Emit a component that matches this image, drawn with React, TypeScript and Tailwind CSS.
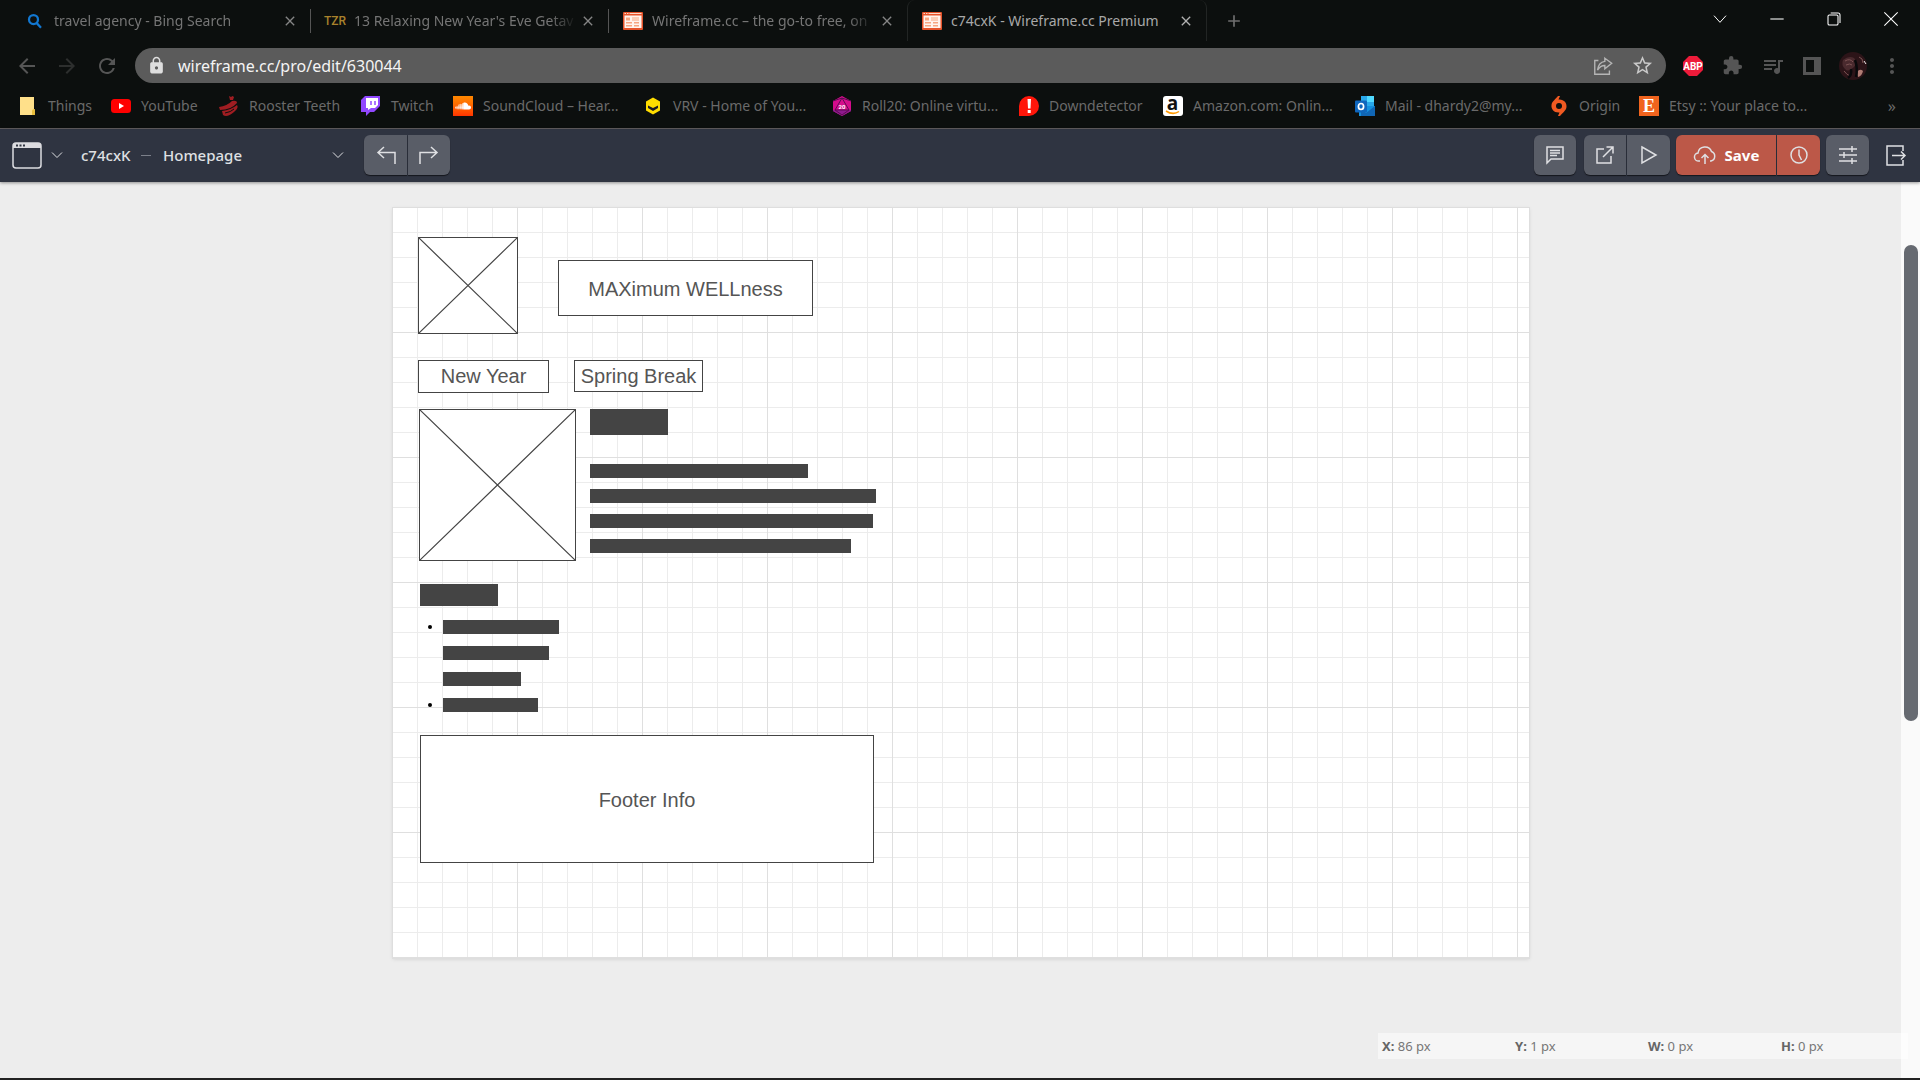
import React from "react";
import { FaSoundcloud } from "react-icons/fa";
import { MdExtension, MdQueueMusic, MdLock, MdStarBorder, MdArrowBack, MdArrowForward, MdRefresh, MdMoreVert, MdClose, MdAdd } from "react-icons/md";

type Children = { children?: React.ReactNode };

function Stroke({ children, className = "size-6", width = 1.5 }: Children & { className?: string; width?: number }) {
  return (
    <svg viewBox="0 0 24 24" className={className} fill="none" stroke="currentColor" strokeWidth={width} aria-hidden="true">
      {children}
    </svg>
  );
}

function BingIcon() {
  return (
    <Stroke className="size-[18px] text-[#1277d0]" width={3}>
      <circle cx="10" cy="10" r="6" />
      <path d="M14 14.500 20 21" />
    </Stroke>
  );
}

function WireframeIcon() {
  return (
    <svg viewBox="0 0 20 18" className="h-[18px] w-5" aria-hidden="true">
      <rect width="20" height="18" rx="1" fill="#e5532a" />
      <path d="M1.500 1.500h1.500M4 1.500h1.500M6.500 1.500h12" stroke="#fbd9c9" strokeWidth="1" />
      <rect x="1.500" y="3.500" width="17" height="12.500" fill="#fff4ee" />
      <path d="M3 5.500h4v3H3zM3 10h6v1.500H3zM3 13h6v1.500H3zM11 10h5v1.500h-5zM11 13h5v1.500h-5zM9 5.500h7v1H9zM9 7.500h7v1H9z" fill="#f7a580" />
    </svg>
  );
}

function TzrIcon() {
  return <span className="font-['Roboto',sans-serif] text-xs font-medium text-[#a9822c]">TZR</span>;
}

const tabs = [
  { title: "travel agency - Bing Search", icon: <BingIcon />, cls: "w-[311px] pl-6 border-r border-[#555]" },
  { title: "13 Relaxing New Year's Eve Getav", icon: <TzrIcon />, cls: "w-[298px] pl-[13px] border-r border-[#555]" },
  { title: "Wireframe.cc – the go-to free, on", icon: <WireframeIcon />, cls: "w-[298px] pl-[13px]" },
];

function Tab({ title, icon, cls }: { title: string; icon: React.ReactNode; cls: string }) {
  return (
    <div className={"flex h-6 shrink-0 items-center pr-3 text-[#757575] " + cls}>
      <span className="flex w-[22px] shrink-0 justify-center">{icon}</span>
      <span className="ml-2 w-[223px] whitespace-nowrap [mask-image:linear-gradient(to_right,#000_88%,transparent)]">{title}</span>
      <button aria-label={"Close " + title} className="ml-auto text-[#858585]"><MdClose className="size-4" /></button>
    </div>
  );
}

const bookmarks = [
  { label: "Things", w: "w-[93px]", icon: <svg viewBox="0 0 20 20" className="size-5"><path d="M2 1h14v13h1v5H2z" fill="#ffe08a" /><path d="M14 19v-4q0-2 3-2v6z" fill="#e8bd3d" /></svg> },
  { label: "YouTube", w: "w-[108px]", icon: <svg viewBox="0 0 20 20" className="size-5"><rect y="3" width="20" height="14" rx="3.500" fill="#f00" /><path d="m8 7 5 3-5 3z" fill="#fff" /></svg> },
  { label: "Rooster Teeth", w: "w-[142px]", icon: <svg viewBox="0 0 20 20" className="size-5"><g fill="#a01d22"><path d="M0 11Q8 10 13 5q5-1 5 2Q12 14 1 14z" /><path d="m10 0 2 1 1.500-1L15 1l-1 3h-3z" /><path d="M3 15q9-1 15-6 2 3-3 7-7 6-11 3z" /></g><path d="M6 17q6-1 9-4" stroke="#0c0f0e" fill="none" /></svg> },
  { label: "Twitch", w: "w-[92px]", icon: <svg viewBox="0 0 20 20" className="size-5"><path d="M4 0 0 4v12h5v4l4-4h4l6-6V0z" fill="#9147ff" /><path d="M5 2h12v7l-3 3h-4l-3 2v-2H5z" fill="#fff" /><path d="M10 5v4M14 5v4" stroke="#9147ff" strokeWidth="1.500" /></svg> },
  { label: "SoundCloud – Hear...", w: "w-[190px]", icon: <span className="flex size-5 items-center justify-center bg-linear-to-b from-[#ff8800] to-[#ff3300] text-white"><FaSoundcloud className="size-4" /></span> },
  { label: "VRV - Home of You...", w: "w-[189px]", icon: <svg viewBox="0 0 20 20" className="size-5"><path d="m10 1.500 7 4v9l-7 4-7-4v-9z" fill="#fd0" /><path d="M5 9.500 10 12l5-2.500V12l-5 3-5-3z" fill="#1b1a26" /></svg> },
  { label: "Roll20: Online virtu...", w: "w-[187px]", icon: <svg viewBox="0 0 20 20" className="size-5"><path d="m10 0 9 5v10l-9 5-9-5V5z" fill="#d60c8c" /><path d="M1 14h18v1l-9 5-9-5z" fill="#8e1a8e" /><path d="m10 2-7 12h14zM3 14l7 5 7-5M1 5l9-3 9 3" stroke="#5d0b52" fill="none" /><text x="10" y="12.500" fontSize="6" fontWeight="700" textAnchor="middle" fill="#fff" fontFamily="Roboto">20</text></svg> },
  { label: "Downdetector", w: "w-[144px]", icon: <svg viewBox="0 0 20 20" className="size-5"><path d="M0 20V10A10 10 0 1 1 10 20z" fill="#ff160a" /><path d="M8.500 3h3.500L11.500 12.500H9zM8.700 14h3v3h-3z" fill="#fff" /></svg> },
  { label: "Amazon.com: Onlin...", w: "w-[192px]", icon: <svg viewBox="0 0 20 20" className="size-5"><rect width="20" height="20" rx="3" fill="#fff" /><text x="9.500" y="13.500" fontSize="19" fontWeight="700" textAnchor="middle" fill="#111" fontFamily="Open Sans">a</text><path d="M3 15q7 4.500 13 .5" stroke="#f90" strokeWidth="1.500" fill="none" /></svg> },
  { label: "Mail - dhardy2@my...", w: "w-[194px]", icon: <svg viewBox="0 0 20 20" className="size-5"><path d="M6 0h13v12H6z" fill="#28a8ea" /><path d="M12 0h7v6h-7z" fill="#50d9ff" /><path d="M4 10h16v10H4z" fill="#1490df" /><path d="m20 10-9 7-5-4v7h14z" fill="#1066b5" /><rect y="4.500" width="12" height="12" rx="1" fill="#0f66bd" /><ellipse cx="6" cy="10.500" rx="2.600" ry="3" fill="none" stroke="#fff" strokeWidth="1.700" /></svg> },
  { label: "Origin", w: "w-[90px]", icon: <svg viewBox="0 0 20 20" className="size-5"><path d="M11 0 9.500 3.500C15 3 18 7 17.500 11 17 15 13 17 11 20H9l1.500-3.500C5 17 2 13 2.500 9 3 5 7 3 9 0z" fill="#f05a22" /><circle cx="10" cy="10" r="3" fill="#0c0f0e" /></svg> },
  { label: "Etsy :: Your place to...", w: "w-[200px]", icon: <span className="flex size-5 items-center justify-center bg-[#f1641e] font-['Liberation_Serif',serif] text-lg font-bold text-white">E</span> },
];

function ToolButton({ label, className, children }: Children & { label: string; className: string }) {
  return (
    <button aria-label={label} className={"flex h-10 items-center justify-center text-[#dfe0e3] shadow-[0_1px_1px_#15171d] " + className}>
      {children}
    </button>
  );
}

function BrowserChrome() {
  return (
    <header className="border-b border-[#625e60] bg-[#0c0f0e] text-sm text-[#6a6a6a]">
      <div className="flex h-[41px] items-center">
        {tabs.map((t) => <Tab key={t.title} {...t} />)}
        <div className="flex h-full w-[300px] shrink-0 items-center rounded-t-lg border-r border-l border-[#222524] pr-3 pl-[13px] text-[#a8a8a8]">
          <span className="flex w-[22px] justify-center"><WireframeIcon /></span>
          <span className="ml-2 whitespace-nowrap">c74cxK - Wireframe.cc Premium</span>
          <button aria-label="Close tab" className="ml-auto text-[#b0b0b0]"><MdClose className="size-4" /></button>
        </div>
        <button aria-label="New tab" className="ml-[17px] text-[#6f6f6f]"><MdAdd className="size-5" /></button>
        <div className="mr-[21px] ml-auto flex items-center gap-[41px] pb-1 text-white">
          <button aria-label="Search tabs"><Stroke className="size-4" width={1.5}><path d="m3 7 9 10 9-10" /></Stroke></button>
          <button aria-label="Minimize"><Stroke className="size-4" width={1.6}><path d="M2 12h20" /></Stroke></button>
          <button aria-label="Restore"><Stroke className="size-4" width={1.6}><rect x="3" y="6" width="15" height="15" rx="2" /><path d="M7 3h11q3 0 3 3v12" /></Stroke></button>
          <button aria-label="Close window"><Stroke className="size-4" width={1.6}><path d="m2 2 20 20M22 2 2 22" /></Stroke></button>
        </div>
      </div>
      <div className="flex h-[49px] items-center pl-[15px]">
        <div className="flex gap-4">
          <button aria-label="Back" className="text-[#555]"><MdArrowBack className="size-6" /></button>
          <button aria-label="Forward" className="text-[#2d2f2e]"><MdArrowForward className="size-6" /></button>
          <button aria-label="Reload" className="text-[#555]"><MdRefresh className="size-6" /></button>
        </div>
        <div className="ml-4 flex h-[35px] flex-1 items-center rounded-full bg-[#5b5b5b] px-3 text-[#dedede]">
          <MdLock className="size-[19px] shrink-0" />
          <input aria-label="Address" defaultValue="wireframe.cc/pro/edit/630044" className="ml-3 h-7 min-w-0 flex-1 bg-transparent text-base text-[#f4f4f4] outline-none" />
          <button aria-label="Share page" className="text-[#b5b5b5]">
            <Stroke className="size-[22px]"><path d="M7 6H3v15h16v-4" /><path d="M14 3.500 21.500 9 14 15v-3.500q-5 0-8 5Q7 8 14 7z" /></Stroke>
          </button>
          <button aria-label="Bookmark page" className="ml-[17px] text-[#c9c9c9]"><MdStarBorder className="size-[23px]" /></button>
        </div>
        <div className="mr-4 ml-4 flex items-center gap-[18px] text-[#555]">
          <svg viewBox="0 0 22 22" className="size-[22px]" aria-label="Adblock Plus">
            <path d="M7 1h8l6 6v8l-6 6H7l-6-6V7z" fill="#ee1b3a" />
            <text x="11" y="14.500" fontSize="10" fontWeight="700" textAnchor="middle" fill="#fff" fontFamily="Roboto">ABP</text>
          </svg>
          <button aria-label="Extensions"><MdExtension className="size-[21px]" /></button>
          <button aria-label="Media"><MdQueueMusic className="size-6" /></button>
          <button aria-label="Side panel"><svg viewBox="0 0 18 18" className="size-[18px]"><path d="M0 0h18v18H0zM3 3v12h8V3z" fill="currentColor" fillRule="evenodd" /></svg></button>
          <svg viewBox="0 0 28 28" className="size-7" aria-label="Profile">
            <circle cx="14" cy="14" r="14" fill="#2c1418" />
            <path d="M4 8q6-5 11-2 4 4 0 9-6 6-9 2Q2 13 4 8z" fill="#4a2a2e" />
            <path d="M6 9q5-3 8 1M7 13q4-2 6 0M5 19q3 4 6 5M20 5q4 1 4 6" stroke="#7d5354" fill="none" />
            <path d="M18 20q3-4 6-1-1 5-5 6z" fill="#b07c74" />
            <path d="M12 17q1 6-3 9M16 8q3 8 1 17" stroke="#09090b" fill="none" strokeWidth="2.500" />
            <path d="m25 9 2 3" stroke="#eee" />
          </svg>
          <button aria-label="Browser menu" className="-ml-[5px]"><MdMoreVert className="size-6" /></button>
        </div>
      </div>
      <nav aria-label="Bookmarks" className="flex h-[38px] items-center pb-[6px] pl-[18px]">
        {bookmarks.map((b) => (
          <a key={b.label} href="#" className={"flex shrink-0 items-center gap-[10px] whitespace-nowrap " + b.w}>
            {b.icon}
            <span>{b.label}</span>
          </a>
        ))}
        <button aria-label="More bookmarks" className="mr-6 ml-auto text-base">»</button>
      </nav>
    </header>
  );
}

function EditorBar() {
  return (
    <div className="z-10 flex h-[53px] items-center bg-[#2f3441] px-3 pb-px text-[15px] text-[#dfe0e3] shadow-[0_1px_3px_#0006]">
      <button aria-label="Device" className="flex items-center gap-[9px]">
        <svg viewBox="0 0 30 27" className="h-[27px] w-[30px]" fill="none">
          <rect x="1" y="1" width="28" height="25" rx="3" stroke="#dcdce0" strokeWidth="1.500" />
          <path d="M1 6V4q0-3 3-3h22q3 0 3 3v2z" fill="#dcdce0" />
          <path d="M4 3.500h2M7.500 3.500h2M11 3.500h2" stroke="#2f3441" strokeWidth="2" />
        </svg>
        <Stroke className="size-3" width={2}><path d="m2 7 10 10L22 7" /></Stroke>
      </button>
      <span className="ml-[18px] w-[50px] font-medium">c74cxK</span>
      <span className="ml-[10px] h-px w-[10px] bg-[#7c808a]" />
      <button className="ml-3 flex w-[181px] items-center justify-between font-medium">
        Homepage
        <Stroke className="size-3" width={2}><path d="m2 7 10 10L22 7" /></Stroke>
      </button>
      <div className="ml-5 flex gap-px">
        <ToolButton label="Undo" className="w-[43px] rounded-l-md bg-[#595d67]"><Stroke><path d="M10 4 4 9.500 10 15M4 9.500h17V21" /></Stroke></ToolButton>
        <ToolButton label="Redo" className="w-[42px] rounded-r-md bg-[#595d67]"><Stroke><path d="m14 4 6 5.500L14 15M20 9.500H3V21" /></Stroke></ToolButton>
      </div>
      <div className="ml-auto flex items-center">
        <ToolButton label="Comments" className="w-[42px] rounded-md bg-[#595d67]"><Stroke><path d="M4 4h16v12H8l-4 4zM7 7.500h10M7 10h10M7 12.500h7" /></Stroke></ToolButton>
        <div className="ml-2 flex gap-px">
          <ToolButton label="Open" className="w-[42px] rounded-l-md bg-[#595d67]"><Stroke><path d="M11 6H4v14h14v-7M10 14 20 4M13.500 4H20v6.500" /></Stroke></ToolButton>
          <ToolButton label="Preview" className="w-[43px] rounded-r-md bg-[#595d67]"><Stroke><path d="m5 4 14 8-14 8z" /></Stroke></ToolButton>
        </div>
        <div className="ml-[6px] flex gap-px">
          <ToolButton label="Save" className="w-[100px] gap-2 rounded-l-md bg-[#bc5848]">
            <Stroke className="size-6"><path d="M7 18H6a4 4 0 0 1-1-8 7 7 0 0 1 13.500-1.500A5 5 0 0 1 18 18h-1M12 21v-9M8.500 15l3.500-3.500 3.500 3.500" /></Stroke>
            <span className="font-bold text-white">Save</span>
          </ToolButton>
          <ToolButton label="History" className="w-[43px] rounded-r-md bg-[#bc5848]"><Stroke><circle cx="12" cy="12" r="8" /><path d="M12 6.500V12l2.500 5" /></Stroke></ToolButton>
        </div>
        <ToolButton label="Settings" className="ml-[6px] w-[43px] rounded-md bg-[#595d67]"><Stroke><path d="M3 6h18M3 12h18M3 18h18M16 3v6M8 9v6M16 15v6" /></Stroke></ToolButton>
        <button aria-label="Exit" className="ml-[15px]"><Stroke><path d="M19 8V3H3v19h16v-5M8 12.500h13M17 8.500l4 4-4 4" /></Stroke></button>
      </div>
    </div>
  );
}

function ImageBox({ className }: { className: string }) {
  return (
    <div className={"absolute border border-[#444] bg-white " + className}>
      <svg viewBox="0 0 100 100" preserveAspectRatio="none" className="size-full" aria-hidden="true">
        <path d="M0 0 100 100M100 0 0 100" stroke="#444" strokeWidth="1.200" vectorEffect="non-scaling-stroke" />
      </svg>
    </div>
  );
}

function TextBox({ className, children }: Children & { className: string }) {
  return <div className={"absolute flex items-center justify-center border border-[#444] bg-white whitespace-nowrap " + className}>{children}</div>;
}

function Artboard() {
  return (
    <div className="relative mx-auto h-[750px] w-[1136px] bg-white bg-[linear-gradient(to_right,transparent_124px,#dfdfdf_124px),linear-gradient(to_bottom,transparent_124px,#dfdfdf_124px),linear-gradient(to_right,transparent_24px,#ececec_24px),linear-gradient(to_bottom,transparent_24px,#ececec_24px)] bg-[length:125px_125px,125px_125px,25px_25px,25px_25px] font-['Liberation_Sans',sans-serif] text-xl text-[#555] shadow-[0_0_0_1px_#dedede,0_1px_4px_#0002]">
      <ImageBox className="top-[29px] left-[25px] h-[97px] w-[100px]" />
      <TextBox className="top-[52px] left-[165px] h-14 w-[255px] pt-[2px]">MAXimum WELLness</TextBox>
      <TextBox className="top-[152px] left-[25px] h-[33px] w-[131px] pb-px">New Year</TextBox>
      <TextBox className="top-[152px] left-[181px] h-8 w-[129px]">Spring Break</TextBox>
      <ImageBox className="top-[201px] left-[26px] h-[152px] w-[157px]" />
      <div className="absolute top-[201px] left-[197px] h-[26px] w-[78px] bg-[#444]" />
      <div className="absolute top-[256px] left-[197px] flex flex-col gap-[11px]">
        <div className="h-[14px] w-[218px] bg-[#444]" />
        <div className="h-[14px] w-[286px] bg-[#444]" />
        <div className="h-[14px] w-[283px] bg-[#444]" />
        <div className="h-[14px] w-[261px] bg-[#444]" />
      </div>
      <div className="absolute top-[376px] left-[27px] h-[22px] w-[78px] bg-[#444]" />
      <ul className="absolute top-[412px] left-[35px] flex flex-col gap-3">
        <li className="flex items-center gap-[11px]"><span className="size-1 rounded-full bg-black" /><div className="h-[14px] w-[116px] bg-[#444]" /></li>
        <li className="ml-[15px] h-[14px] w-[106px] bg-[#444]" />
        <li className="ml-[15px] h-[14px] w-[78px] bg-[#444]" />
        <li className="flex items-center gap-[11px]"><span className="size-1 rounded-full bg-black" /><div className="h-[14px] w-[95px] bg-[#444]" /></li>
      </ul>
      <TextBox className="top-[527px] left-[27px] h-32 w-[454px] pt-[2px]">Footer Info</TextBox>
    </div>
  );
}

export default function App() {
  return (
    <div className="flex min-h-screen flex-col border-b-2 border-[#222] bg-[#ededed] font-['Noto_Sans','Open_Sans',sans-serif]">
      <BrowserChrome />
      <EditorBar />
      <main className="relative flex-1 pt-[26px] pb-[120px] pl-[2px]">
        <Artboard />
        <div className="absolute inset-y-0 right-0 w-[19px] bg-[#fafafa] pt-[63px]">
          <div className="mx-auto h-[476px] w-[14px] rounded-full bg-[#666a71]" />
        </div>
        <div className="absolute right-3 bottom-[19px] grid h-[26px] w-[530px] grid-cols-[133px_133px_133px_1fr] items-center bg-white/50 pt-[2px] pl-1 text-[13px] text-[#777]">
          <span><b className="text-[#666]">X:</b> 86 px</span>
          <span><b className="text-[#666]">Y:</b> 1 px</span>
          <span><b className="text-[#666]">W:</b> 0 px</span>
          <span><b className="text-[#666]">H:</b> 0 px</span>
        </div>
      </main>
    </div>
  );
}
